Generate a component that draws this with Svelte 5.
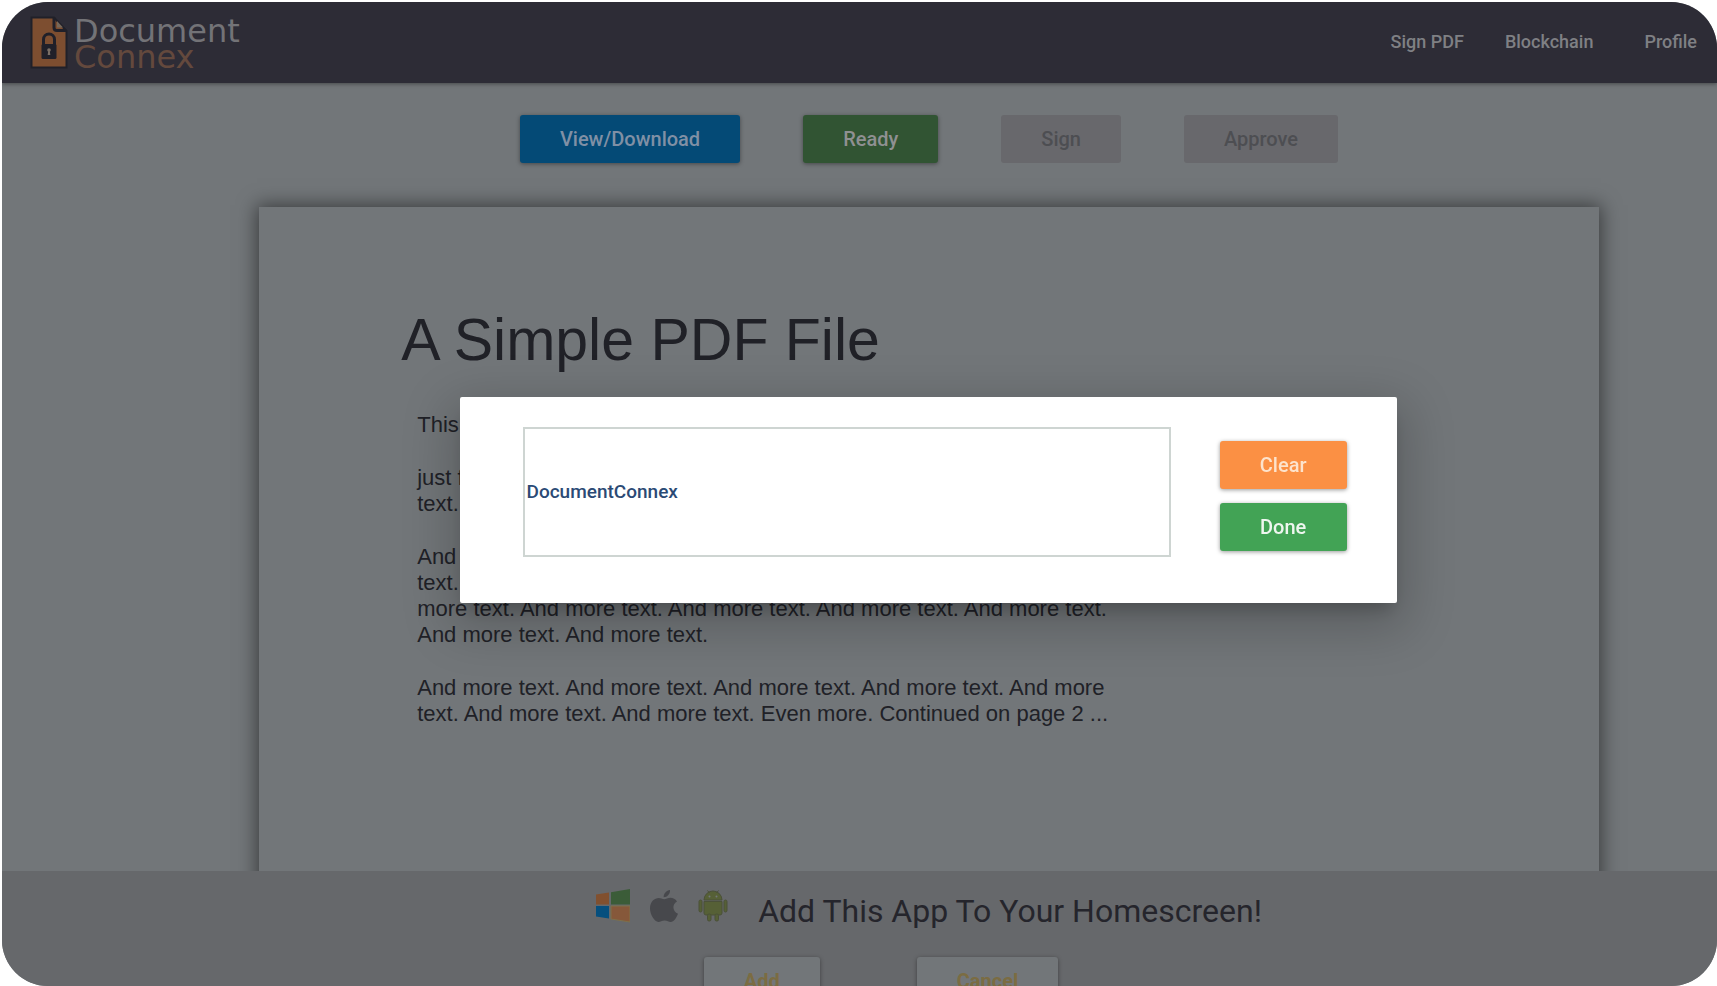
<script lang="ts">
    const links = ['Sign PDF', 'Blockchain', 'Profile'];
    const actions = [
        { label: 'View/Download', kind: 'view', disabled: false },
        { label: 'Ready', kind: 'ready', disabled: false },
        { label: 'Sign', kind: 'off', disabled: true },
        { label: 'Approve', kind: 'off', disabled: true }
    ];

    let signature = $state('DocumentConnex');
    let signing = $state(true);
</script>

<div class="app">
    <header>
        <a class="logo" href="#home" aria-label="Document Connex">
            <svg width="38" height="53" viewBox="0 0 38 53">
                <path d="M1.5 1.5H24L36.500 15V51.500H1.500Z" fill="#7d4e30" stroke="#202029" stroke-width="2" />
                <path d="M24 1.500V11.500Q24 14.500 27 14.500H36.500" fill="none" stroke="#202029" stroke-width="3" />
                <path d="M27 5V11.500H33Z" fill="#75685a" />
                <path d="M13.500 29V23.500a5.500 5.500 0 0 1 11 0V29" fill="none" stroke="#202029" stroke-width="3" />
                <rect x="11.500" y="28" width="15" height="15" rx="1.500" fill="#202029" />
                <circle cx="19" cy="34" r="1.800" fill="#7b7067" />
                <path d="M18.300 34h1.400l.6 5h-2.600Z" fill="#7b7067" />
            </svg>
            <span class="wordmark">
                <span>Document</span>
                <span class="second">Connex</span>
            </span>
        </a>
        <nav>
            {#each links as link}
                <a href="#{link}">{link}</a>
            {/each}
        </nav>
    </header>

    <main>
        <div class="actions">
            {#each actions as action}
                <button class="btn {action.kind}" disabled={action.disabled}>{action.label}</button>
            {/each}
        </div>

        <article class="paper">
            <h1>A Simple PDF File</h1>
            <div class="copy">
                <p>This is a small demonstration .pdf file -</p>
                <p>just for use in the Virtual Mechanics tutorials. More text. And more<br />text. And more text. And more text. And more text.</p>
                <p>And more text. And more text. And more text. And more text. And more text. And more text. And more text. And more text. And more<br />more text. And more text. And more text. And more text. And more text. And more text. And more text.</p>
                <p>And more text. And more text. And more text. And more text. And more text. And more text. And more text. Even more. Continued on page 2 ...</p>
            </div>
        </article>
    </main>

    <footer>
        <div class="promo">
            <div class="platforms">
                <svg width="34" height="34" viewBox="0 0 34 34">
                    <path d="M0 5.500L13 3.500V15.500H0Z" fill="#81502f" />
                    <path d="M15 3.200L34 0V15.500H15Z" fill="#3b5c38" />
                    <path d="M0 17H13V29.500L0 27.500Z" fill="#064f7e" />
                    <path d="M15 17H34V33L15 30Z" fill="#86583a" stroke="#7d704b" />
                </svg>
                <svg width="28" height="34" viewBox="0 0 28 34">
                    <path d="M20 1c.4 3.700-2.900 7.200-6.300 7.300C13.300 4.800 16.500 1.500 20 1Z" fill="#47484c" />
                    <path d="M27 12.500c-5.200 3-4.600 9.900 1 12.200-1.600 4.300-4.300 8.200-7.200 8.300-2.300 0-3.400-1.400-6.200-1.400S10.500 33 8.400 33C4.700 33 0 25.800 0 19.600 0 10.500 7.500 7.500 11.500 9.600c2.200 1 3.200 1 5.500 0 3.700-1.700 7.800-.4 10 2.900Z" fill="#47484c" />
                </svg>
                <svg width="30" height="34" viewBox="0 0 30 34">
                    <g fill="#566036" stroke="#4b5139" stroke-width="1">
                        <path d="M6 11a9 9 0 0 1 18 0Z" />
                        <path d="M6 12.500H24V24q0 2-2 2H8q-2 0-2-2Z" />
                        <rect x="1" y="11" width="3" height="12" rx="1.500" />
                        <rect x="26" y="11" width="3" height="12" rx="1.500" />
                        <rect x="9.500" y="25" width="3.500" height="7" rx="1.500" />
                        <rect x="17" y="25" width="3.500" height="7" rx="1.500" />
                        <path d="M9.500 1.500L11.500 4M20.500 1.500L18.500 4" />
                    </g>
                    <circle cx="11.500" cy="7.500" r="1" fill="#727679" />
                    <circle cx="18.500" cy="7.500" r="1" fill="#727679" />
                </svg>
            </div>
            <h2>Add This App To Your Homescreen!</h2>
        </div>
        <div class="promo-buttons">
            <button class="btn plain">Add</button>
            <button class="btn plain">Cancel</button>
        </div>
    </footer>
</div>

{#if signing}
<div class="overlay">
    <div class="dialog" role="dialog" aria-label="Signature">
        <input class="signature" aria-label="Signature" bind:value={signature} />
        <div class="dialog-buttons">
            <button class="btn clear" onclick={() => (signature = '')}>Clear</button>
            <button class="btn done" onclick={() => (signing = false)}>Done</button>
        </div>
    </div>
</div>
{/if}

<style>
    :global(body) {
        background: #ffffff;
        font-family: Roboto, sans-serif;
    }

    .app {
        height: calc(100vh - 2px);
        margin: 2px 0 0 2px;
        box-sizing: border-box;
        display: flex;
        flex-direction: column;
        overflow: hidden;
        border-radius: 46px;
        background: #727679;
    }

    header {
        flex: none;
        height: 81px;
        padding: 0 20px 0 28px;
        display: flex;
        justify-content: space-between;
        align-items: center;
        background: #2d2c36;
        box-shadow: 0 1px 4px rgba(0, 0, 0, 0.4);
    }

    .logo {
        display: flex;
        align-items: center;
        gap: 6px;
        text-decoration: none;
    }

    .wordmark {
        display: flex;
        flex-direction: column;
        padding-top: 3px;
        font-family: 'DejaVu Sans', sans-serif;
        font-size: 32px;
        line-height: 26px;
        color: #737377;
    }

    .second {
        color: #64493d;
    }

    nav {
        display: flex;
        gap: 41px;
        padding-bottom: 2px;
    }

    nav a {
        color: #7f8084;
        font-size: 18px;
        font-weight: 500;
        line-height: 24px;
        text-decoration: none;
    }

    nav a:last-child {
        padding-left: 10px;
    }

    main {
        flex: 1;
        min-height: 0;
        overflow: hidden;
        padding: 32px 0 0 139px;
    }

    .actions {
        display: flex;
        justify-content: center;
        gap: 63px;
    }

    .btn {
        height: 48px;
        padding: 0 40px;
        border: none;
        border-radius: 3px;
        font-family: Roboto, sans-serif;
        font-size: 20px;
        font-weight: 500;
        color: #8f9092;
        box-shadow: 0 1px 4px rgba(0, 0, 0, 0.4);
        cursor: pointer;
    }

    .view {
        background: #044a76;
        color: #8090a5;
    }

    .ready {
        background: #315433;
    }

    .off {
        background: #68686c;
        color: #4d4e52;
        box-shadow: none;
    }

    .paper {
        box-sizing: border-box;
        width: 85%;
        min-height: 900px;
        margin: 44px auto 0;
        padding: 98px 142px;
        background: #727679;
        box-shadow: 0 0 18px 2px rgba(0, 0, 0, 0.5);
        font-family: 'Liberation Sans', Arial, sans-serif;
        color: #202127;
    }

    h1 {
        margin: 0 0 37px;
        font-size: 59px;
        font-weight: 400;
        line-height: 70px;
    }

    .copy {
        max-width: 700px;
        padding-left: 16px;
        font-size: 22px;
        line-height: 26px;
    }

    .copy p {
        margin: 0 0 27px;
    }

    footer {
        flex: none;
        height: 115px;
        box-sizing: border-box;
        overflow: hidden;
        padding: 14px 0 0 139px;
        background: #66686b;
    }

    .promo {
        display: flex;
        justify-content: center;
        gap: 30px;
    }

    .platforms {
        display: flex;
        align-items: flex-start;
        gap: 20px;
        padding-top: 4px;
    }

    h2 {
        margin: 0;
        font-size: 32px;
        font-weight: 400;
        line-height: 52px;
        color: #25252c;
    }

    .promo-buttons {
        display: flex;
        justify-content: center;
        gap: 97px;
        padding: 20px 96px 0 0;
    }

    .plain {
        background: #727679;
        color: #7b6c42;
        font-weight: 700;
    }

    .overlay {
        position: fixed;
        inset: 0;
        padding: 13px 0 0 139px;
        display: flex;
        justify-content: center;
        align-items: center;
    }

    .dialog {
        box-sizing: border-box;
        width: 60%;
        max-width: 937px;
        padding: 30px 50px 46px 63px;
        display: flex;
        align-items: flex-start;
        gap: 49px;
        border-radius: 2px;
        background: #ffffff;
        box-shadow: 0 12px 16px -6px rgba(0, 0, 0, 0.2), 0 16px 50px 10px rgba(0, 0, 0, 0.2);
    }

    .signature {
        flex: 1;
        min-width: 0;
        height: 130px;
        box-sizing: border-box;
        padding: 0 2px;
        border: 2px solid #ced5d2;
        font-family: Roboto, sans-serif;
        font-size: 19px;
        font-weight: 500;
        color: #2b4a75;
    }

    .dialog-buttons {
        display: flex;
        flex-direction: column;
        gap: 14px;
        padding-top: 14px;
    }

    .clear {
        background: #fb9044;
        color: #fde3cc;
    }

    .done {
        background: #42a355;
        color: #eef6ef;
    }
</style>
